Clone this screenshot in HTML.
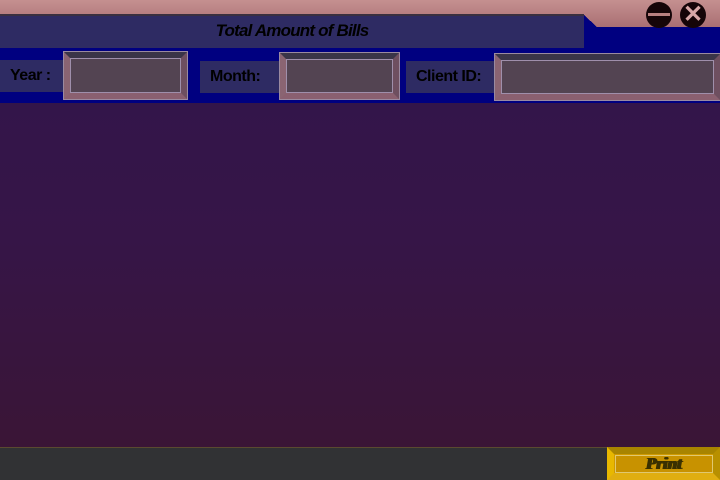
<!DOCTYPE html>
<html><head><style>
*{margin:0;padding:0;box-sizing:border-box}
body{width:720px;height:480px;position:relative;overflow:hidden;font-family:"Liberation Sans",sans-serif;background:#361545}
div{position:absolute}
.lbl{background:#2e2b63;color:#000;font-weight:bold;font-size:16px;line-height:31px;letter-spacing:-0.5px}
.inp{background:#534452;border:6px solid;border-color:#3a3548 #6e4f60 #8a6070 #8a6472;box-shadow:0 0 0 1px #9a8aa0}
.inp::after{content:"";position:absolute;left:0;top:0;right:0;bottom:0;border:1px solid #9f8fab}
</style></head><body>
<div style="left:0;top:0;width:720px;height:28px;background:linear-gradient(#c59090,#a86e72)"></div>
<div style="left:0;top:14px;width:584px;height:34px;background:#2e2b63;border-top:2px solid #3a3040"></div>
<div style="left:584px;top:27px;width:136px;height:22px;background:#000080"></div>
<div style="left:584px;top:15px;width:13px;height:12px;background:linear-gradient(to top right,#000080 50%,transparent 50%)"></div>
<div style="left:0;top:21px;width:584px;text-align:center;font-style:italic;font-weight:bold;font-size:17px;color:#000;letter-spacing:-0.8px">Total Amount of Bills</div>
<div style="left:646px;top:2px;width:26px;height:26px;border-radius:50%;background:#150508"><div style="left:2px;top:11px;width:22px;height:3px;background:#b88080"></div></div>
<div style="left:680px;top:2px;width:26px;height:26px;border-radius:50%;background:#150508;color:#d8a8a8;font-size:24px;font-weight:bold;text-align:center;line-height:26px">✕</div>
<div style="left:0;top:48px;width:720px;height:55px;background:#000080"></div>
<div class="lbl" style="left:0;top:60px;width:63px;height:32px;padding-left:10px">Year :</div>
<div class="inp" style="left:64px;top:52px;width:123px;height:47px"></div>
<div class="lbl" style="left:200px;top:61px;width:80px;height:32px;padding-left:10px">Month:</div>
<div class="inp" style="left:280px;top:53px;width:119px;height:46px"></div>
<div class="lbl" style="left:406px;top:61px;width:90px;height:32px;padding-left:10px">Client ID:</div>
<div class="inp" style="left:495px;top:54px;width:225px;height:46px"></div>
<div style="left:0;top:103px;width:720px;height:344px;background:linear-gradient(#33154a,#361547 40%,#3a1536)"></div>
<div style="left:0;top:447px;width:720px;height:33px;background:#313234;border-top:1px solid #5a4a30"></div>
<div style="left:607px;top:447px;width:113px;height:33px;background:#d09a00;border:7px solid;border-color:#a88400 #b89000 #e0ae10 #e8b800"></div>
<div style="left:615px;top:455px;width:98px;height:18px;border:1px solid #e0c870;background:#c89200;text-align:center;font-family:'Liberation Serif',serif;font-weight:900;font-style:italic;font-size:17px;line-height:16px;color:#3a3000;letter-spacing:0px;text-shadow:1px 0 #3a3000,-1px 0 #3a3000">Print</div>
</body></html>
